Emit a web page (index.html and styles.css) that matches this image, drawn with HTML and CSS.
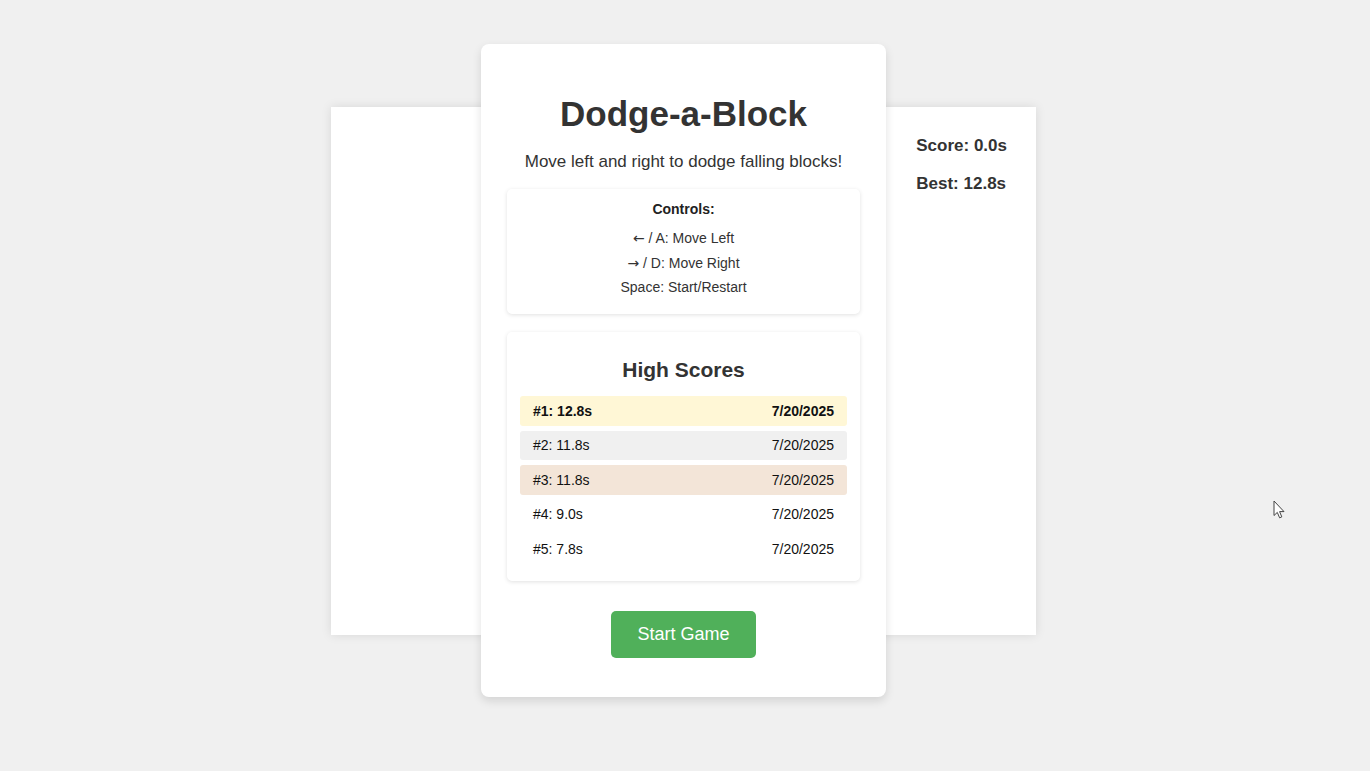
FILE: index.html
```html
<!DOCTYPE html>
<html lang="en">
<head>
<meta charset="utf-8">
<title>Dodge-a-Block</title>
<link rel="stylesheet" href="styles.css">
</head>
<body>
  <div class="stage">
    <div class="game">
      <div class="hud">
        <div class="hud-line">Score: 0.0s</div>
        <div class="hud-line">Best: 12.8s</div>
      </div>
      <div class="overlay">
        <h1 class="title">Dodge-a-Block</h1>
        <p class="subtitle">Move left and right to dodge falling blocks!</p>
        <div class="panel controls">
          <div class="controls-title">Controls:</div>
          <div class="controls-line"><span class="arrow">←</span> / A: Move Left</div>
          <div class="controls-line"><span class="arrow">→</span> / D: Move Right</div>
          <div class="controls-line">Space: Start/Restart</div>
        </div>
        <div class="panel scores">
          <h3 class="scores-title">High Scores</h3>
          <div class="score-list">
            <div class="score-row gold"><span>#1: 12.8s</span><span>7/20/2025</span></div>
            <div class="score-row silver"><span>#2: 11.8s</span><span>7/20/2025</span></div>
            <div class="score-row bronze"><span>#3: 11.8s</span><span>7/20/2025</span></div>
            <div class="score-row"><span>#4: 9.0s</span><span>7/20/2025</span></div>
            <div class="score-row"><span>#5: 7.8s</span><span>7/20/2025</span></div>
          </div>
        </div>
        <button class="start-btn" type="button">Start Game</button>
      </div>
    </div>
  </div>
  <svg class="cursor" width="13" height="20" viewBox="0 0 13 20" xmlns="http://www.w3.org/2000/svg">
    <path d="M1 1 L1 15.5 L4.3 12.4 L6.6 17.8 L8.8 16.9 L6.6 11.6 L11 11.6 Z" fill="#fff" stroke="#444" stroke-width="1" stroke-linejoin="round"/>
  </svg>
</body>
</html>
```

FILE: styles.css
```css
* {
  box-sizing: border-box;
}

html, body {
  margin: 0;
  padding: 0;
  background: #f0f0f0;
  font-family: "Liberation Sans", Arial, sans-serif;
  color: #333;
}

body {
  width: 1370px;
  height: 771px;
  overflow: hidden;
  position: relative;
}

.stage {
  padding-top: 107px;
  padding-left: 331px;
}

.game {
  position: relative;
  width: 705px;
  height: 528px;
  background: #fff;
  box-shadow: 0 0 10px rgba(0, 0, 0, 0.1);
}

.hud {
  position: absolute;
  top: 29px;
  right: 29px;
  display: flex;
  flex-direction: column;
  gap: 18px;
}

.hud-line {
  font-size: 17px;
  font-weight: bold;
  line-height: 20px;
  color: #333;
}

.overlay {
  position: absolute;
  top: -63px;
  left: 150px;
  width: 405px;
  height: 653px;
  background: #fff;
  border-radius: 8px;
  box-shadow: 0 4px 10px rgba(0, 0, 0, 0.12);
  padding: 50px 26px 0;
  display: flex;
  flex-direction: column;
  align-items: stretch;
  text-align: center;
}

.title {
  margin: 0;
  font-size: 35px;
  line-height: 40px;
  font-weight: bold;
  color: #333;
}

.subtitle {
  margin: 18px 0 0;
  font-size: 17px;
  line-height: 20px;
  color: #333;
}

.panel {
  background: #fff;
  border-radius: 5px;
  box-shadow: 0 1px 4px rgba(0, 0, 0, 0.12);
}

.controls {
  margin-top: 17px;
  height: 125px;
  padding: 12px 15px 0;
  font-size: 14px;
}

.controls-title {
  font-weight: bold;
  line-height: 16px;
  margin-bottom: 9px;
  color: #222;
}

.controls-line {
  line-height: 24.5px;
  color: #333;
}

.arrow {
  font-family: "DejaVu Sans", sans-serif;
  font-size: 14px;
}

.scores {
  margin-top: 18px;
  height: 249px;
  padding: 26px 13px 0;
}

.scores-title {
  margin: 0 0 14px;
  font-size: 21px;
  line-height: 24px;
  font-weight: bold;
  color: #333;
}

.score-list {
  display: flex;
  flex-direction: column;
  gap: 5px;
}

.score-row {
  display: flex;
  justify-content: space-between;
  height: 29.5px;
  align-items: center;
  padding: 0 13px;
  border-radius: 3px;
  font-size: 14px;
  color: #111;
}

.score-row.gold {
  background: #fff7d6;
  font-weight: bold;
}

.score-row.silver {
  background: #f0f0f0;
}

.score-row.bronze {
  background: #f3e5d8;
}

.start-btn {
  align-self: center;
  margin-top: 30px;
  width: 145px;
  height: 47px;
  border: none;
  border-radius: 5px;
  background: #50b05a;
  color: #fff;
  font-family: "Liberation Sans", Arial, sans-serif;
  font-size: 18px;
  cursor: pointer;
}

.cursor {
  position: absolute;
  left: 1273px;
  top: 500px;
}
```
